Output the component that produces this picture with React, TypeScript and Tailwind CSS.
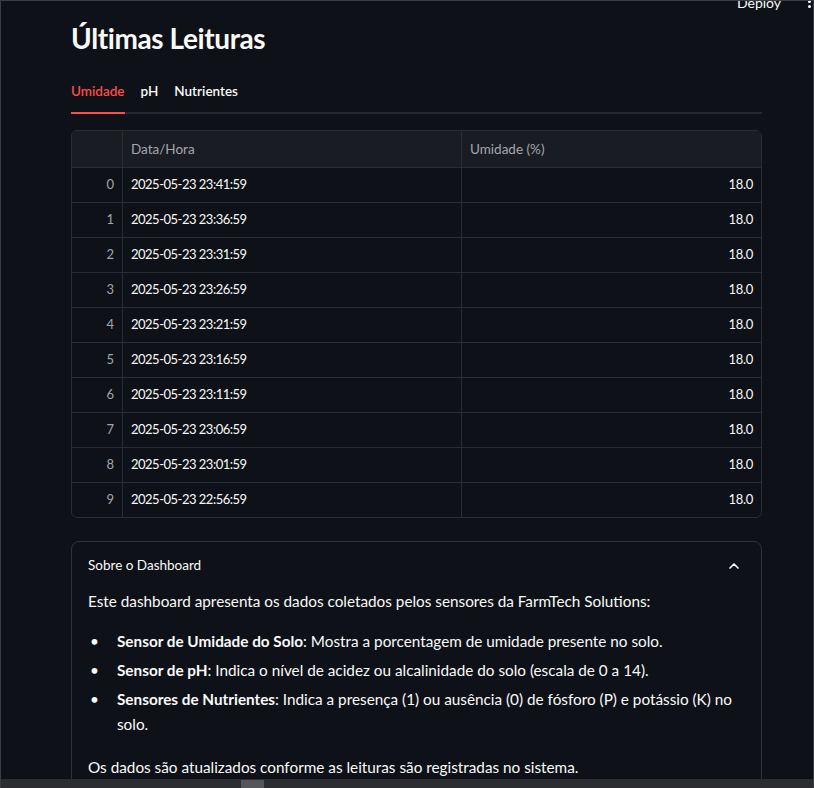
import React from 'react';
import { ChevronUp } from 'lucide-react';

const rows = [
  '2025-05-23 23:41:59',
  '2025-05-23 23:36:59',
  '2025-05-23 23:31:59',
  '2025-05-23 23:26:59',
  '2025-05-23 23:21:59',
  '2025-05-23 23:16:59',
  '2025-05-23 23:11:59',
  '2025-05-23 23:06:59',
  '2025-05-23 23:01:59',
  '2025-05-23 22:56:59',
];

function Tabs() {
  return (
    <div className="mt-[25px] flex flex-col">
      <div className="flex gap-4 text-[13.5px] font-semibold h-[21px] items-center">
        <span className="text-[#ff4b4b]">Umidade</span>
        <span className="text-[#fafafa]">pH</span>
        <span className="text-[#fafafa]">Nutrientes</span>
      </div>
      <div className="mt-[10px] h-[2px] bg-[#262730] flex">
        <div className="w-[54px] h-[2px] bg-[#ff4b4b]" />
      </div>
    </div>
  );
}

function DataTable() {
  return (
    <div className="mt-[16px] border border-[#2b2d35] rounded-[6px] overflow-hidden text-[13.5px]">
      <div className="flex h-[36px] bg-[#1a1c24] text-[#a3a6ad]">
        <div className="w-[51px] border-r border-[#2b2d35]" />
        <div className="w-[339px] border-r border-[#2b2d35] flex items-center px-2">Data/Hora</div>
        <div className="flex-1 flex items-center px-2">Umidade (%)</div>
      </div>
      {rows.map((r, i) => (
        <div key={i} className="flex h-[35px] border-t border-[#2b2d35]">
          <div className="w-[51px] border-r border-[#2b2d35] flex items-center justify-end px-2 text-[#a3a6ad] text-[13px]">{i}</div>
          <div className="w-[339px] border-r border-[#2b2d35] flex items-center px-2 text-[#fafafa] text-[13px] tracking-[-0.5px]">{r}</div>
          <div className="flex-1 flex items-center justify-end px-2 text-[#fafafa] text-[13px] tracking-[-0.3px]">18.0</div>
        </div>
      ))}
    </div>
  );
}

function Bullet({ children }: { children: React.ReactNode }) {
  return (
    <li className="flex">
      <span className="w-[29px] shrink-0 pl-[2px]">•</span>
      <span>{children}</span>
    </li>
  );
}

function Expander() {
  return (
    <div className="mt-[23px] border border-[#30323a] rounded-[8px] text-[#fafafa]">
      <div className="flex items-center justify-between h-[47px] px-4 text-[13.5px]">
        <span>Sobre o Dashboard</span>
        <ChevronUp className="w-[16px] h-[16px] mr-[3px]" strokeWidth={2.5} />
      </div>
      <div className="px-4 pb-[24px] text-[15.3px] leading-[25px]">
        <p>Este dashboard apresenta os dados coletados pelos sensores da FarmTech Solutions:</p>
        <ul className="mt-[15px] flex flex-col gap-[4px]">
          <Bullet><b className="font-bold">Sensor de Umidade do Solo</b>: Mostra a porcentagem de umidade presente no solo.</Bullet>
          <Bullet><b className="font-bold">Sensor de pH</b>: Indica o nível de acidez ou alcalinidade do solo (escala de 0 a 14).</Bullet>
          <Bullet><b className="font-bold">Sensores de Nutrientes</b>: Indica a presença (1) ou ausência (0) de fósforo (P) e potássio (K) no solo.</Bullet>
        </ul>
        <p className="mt-[18px]">Os dados são atualizados conforme as leituras são registradas no sistema.</p>
      </div>
    </div>
  );
}

export default function App() {
  return (
    <div
      className="relative w-[814px] h-[788px] overflow-hidden bg-[#0e1117] border-t border-l border-r border-[#3a3d44]"
      style={{ fontFamily: 'Lato, "Noto Sans", sans-serif' }}
    >
      <div className="absolute top-[-9px] right-[32px] text-[14px] text-[#fafafa]">Deploy</div>
      <div className="absolute top-[-6px] right-[2px] flex flex-col gap-[2px]">
        <span className="w-[3px] h-[3px] rounded-full bg-[#fafafa]" />
        <span className="w-[3px] h-[3px] rounded-full bg-[#fafafa]" />
        <span className="w-[3px] h-[3px] rounded-full bg-[#fafafa]" />
      </div>
      <div className="pl-[70px] pr-[51px] pt-[19px]">
        <h1 className="text-[28px] font-bold text-[#fafafa] leading-[36px] tracking-[-0.4px]">Últimas Leituras</h1>
        <Tabs />
        <DataTable />
        <Expander />
      </div>
      <div className="absolute left-0 right-0 bottom-0 h-[9px] bg-[#2c2d30]">
        <div className="absolute left-[240px] top-[1px] w-[23px] h-[8px] bg-[#55575c]" />
      </div>
    </div>
  );
}
